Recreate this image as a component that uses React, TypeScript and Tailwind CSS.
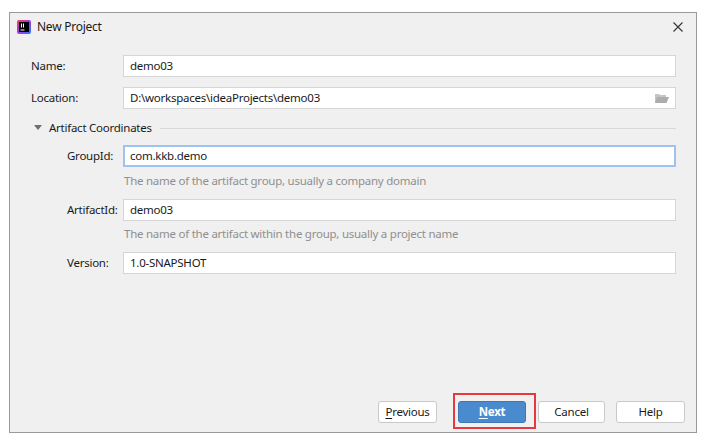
import React from "react";

const font = { fontFamily: '"Noto Sans", "Liberation Sans", sans-serif', letterSpacing: "-0.25px" };

function IdeaIcon() {
  return (
    <svg width="14" height="14" viewBox="0 0 14 14">
      <defs>
        <linearGradient id="ig" x1="0" y1="0" x2="1" y2="1">
          <stop offset="0" stopColor="#fc3a5b" />
          <stop offset="0.5" stopColor="#a03cf0" />
          <stop offset="1" stopColor="#1f7cf2" />
        </linearGradient>
      </defs>
      <rect x="0" y="0" width="14" height="14" rx="2" fill="url(#ig)" />
      <rect x="2" y="2" width="10" height="10" fill="#000" />
      <rect x="3.5" y="9.5" width="4" height="1" fill="#fff" />
      <rect x="4" y="3.5" width="1" height="4" fill="#fff" />
      <rect x="6" y="3.5" width="1" height="4" fill="#fff" />
    </svg>
  );
}

function Field({ value, focused, folder }: { value: string; focused?: boolean; folder?: boolean }) {
  return (
    <div
      className={
        "flex h-[22px] flex-1 items-center justify-between bg-white pr-[6px] text-[11.5px] text-[#1a1a1a] " +
        (focused ? "border-2 border-[#9ec3f0] pl-[5px]" : "border border-[#d6d6d6] pl-[6px]")
      }
    >
      <span>{value}</span>
      {folder && (
        <svg width="14" height="10" viewBox="0 0 14 10">
          <path d="M0 1 L0 10 L11 10 L11 2 L5 2 L4 1 Z" fill="#c5c5c5" />
          <path d="M2 4 L14 4 L11.5 10 L0 10 Z" fill="#adadad" />
        </svg>
      )}
    </div>
  );
}

function Btn({ children, primary }: { children: React.ReactNode; primary?: boolean }) {
  return (
    <div
      className={
        "flex h-[22px] items-center justify-center rounded-[3px] text-[11.5px] " +
        (primary
          ? "border border-[#3f77b6] bg-[#4a8bd0] font-bold text-white"
          : "border border-[#c9c9c9] bg-white text-[#1a1a1a]")
      }
    >
      {children}
    </div>
  );
}

export default function App() {
  return (
    <div className="h-[438px] w-[713px] bg-white pl-[9px] pt-[12px]" style={font}>
      <div className="flex h-[421px] w-[688px] flex-col border border-[#9a9a9a] bg-[#f0f0f0]">
        {/* title bar */}
        <div className="flex h-[27px] items-center pl-[7px] pr-[13px]">
          <IdeaIcon />
          <span className="ml-[6px] flex-1 text-[12px] text-[#1a1a1a]">New Project</span>
          <svg width="10" height="10" viewBox="0 0 10 10">
            <path d="M0.5 0.5 L9.5 9.5 M9.5 0.5 L0.5 9.5" stroke="#333" strokeWidth="1.1" />
          </svg>
        </div>

        {/* form */}
        <div className="mt-[15px] flex flex-col pl-[21px] pr-[20px] text-[11.5px] text-[#1a1a1a]">
          <div className="flex items-center">
            <span className="w-[92px]">Name:</span>
            <Field value="demo03" />
          </div>
          <div className="mt-[10px] flex items-center">
            <span className="w-[92px]">Location:</span>
            <Field value="D:\workspaces\ideaProjects\demo03" folder />
          </div>
          <div className="mt-[8px] flex h-[22px] items-center">
            <svg width="8" height="6" viewBox="0 0 8 6" className="ml-[3px]">
              <path d="M0 0 L8 0 L4 5 Z" fill="#6e6e6e" />
            </svg>
            <span className="ml-[7px]">Artifact Coordinates</span>
            <div className="ml-[8px] h-px flex-1 bg-[#d9d9d9]" />
          </div>
          <div className="ml-[36px] flex flex-col">
            <div className="mt-[6px] flex items-center">
              <span className="w-[56px]">GroupId:</span>
              <Field value="com.kkb.demo" focused />
            </div>
            <div className="ml-[57px] h-[32px] pt-[6px] leading-[16px] text-[#8f8f8f]">
              The name of the artifact group, usually a company domain
            </div>
            <div className="flex items-center">
              <span className="w-[56px]">ArtifactId:</span>
              <Field value="demo03" />
            </div>
            <div className="ml-[57px] h-[31px] pt-[5px] leading-[16px] text-[#8f8f8f]">
              The name of the artifact within the group, usually a project name
            </div>
            <div className="flex items-center">
              <span className="w-[56px]">Version:</span>
              <Field value="1.0-SNAPSHOT" />
            </div>
          </div>
        </div>

        <div className="flex-1" />

        {/* buttons */}
        <div className="mb-[9px] flex items-center justify-end pr-[11px]">
          <div className="w-[59px]">
            <Btn>
              <span className="underline underline-offset-2">P</span>revious
            </Btn>
          </div>
          <div className="relative ml-[21px] w-[68px]">
            <Btn primary>
              <span className="underline underline-offset-2">N</span>ext
            </Btn>
            <div className="absolute -bottom-[6px] -left-[5px] -right-[10px] -top-[8px] border-2 border-[#e8373f]" />
          </div>
          <div className="ml-[12px] w-[67px]">
            <Btn>Cancel</Btn>
          </div>
          <div className="ml-[11px] w-[69px]">
            <Btn>Help</Btn>
          </div>
        </div>
      </div>
    </div>
  );
}
